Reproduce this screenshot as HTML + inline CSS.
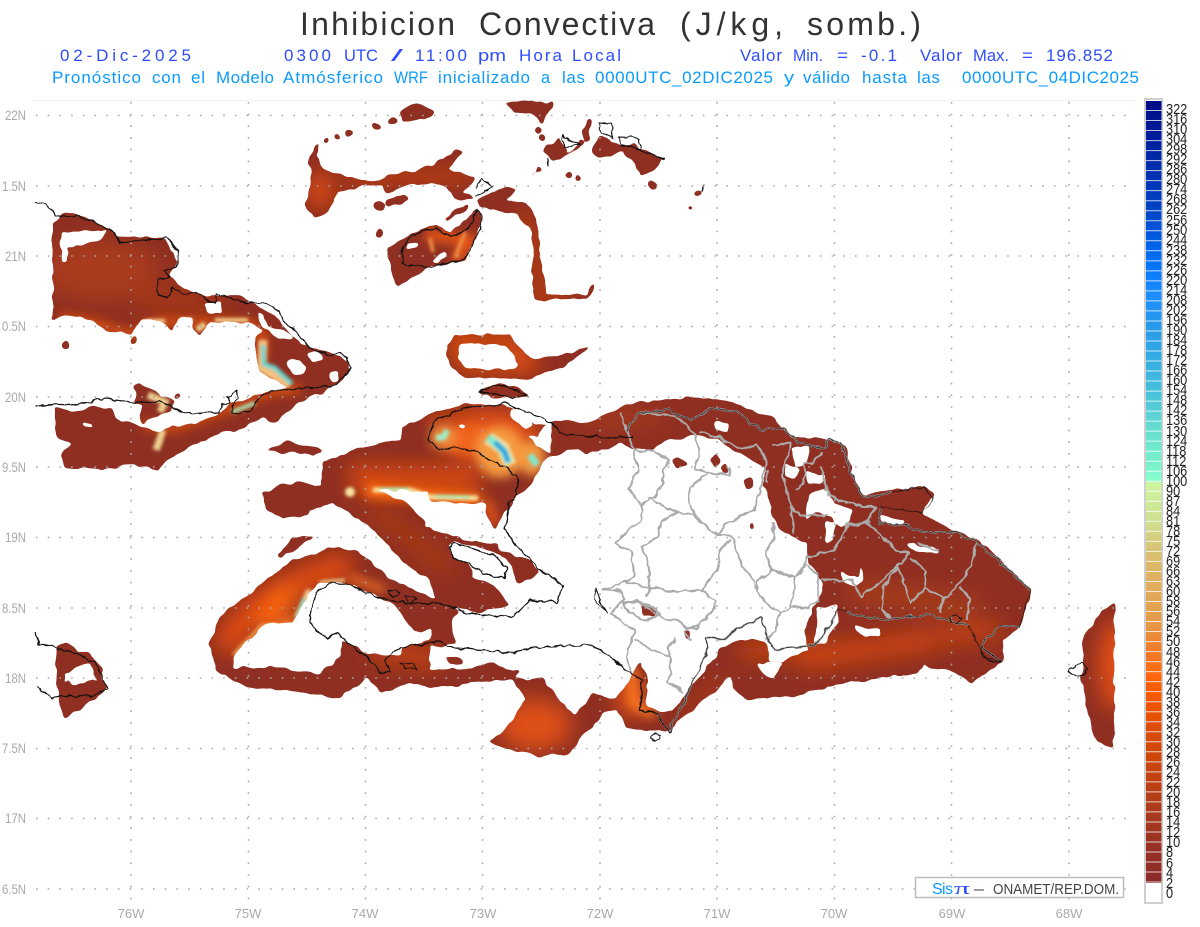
<!DOCTYPE html>
<html><head><meta charset="utf-8"><style>
html,body{margin:0;padding:0;background:#fff}
body{width:1200px;height:927px;overflow:hidden;position:relative}
svg{position:absolute;left:0;top:0}
#cb{position:absolute;left:1166px;top:105px;font:15px/10.05px "Liberation Sans",sans-serif;color:#222;transform:scaleX(.85);transform-origin:0 0}
text{font-family:"Liberation Sans",sans-serif}
</style></head><body>
<svg width="1200" height="927" viewBox="0 0 1200 927">
<defs>
<filter id="b2" filterUnits="userSpaceOnUse" x="0" y="0" width="1200" height="927"><feGaussianBlur stdDeviation="1.6"/></filter>
<filter id="b5" filterUnits="userSpaceOnUse" x="0" y="0" width="1200" height="927"><feGaussianBlur stdDeviation="5"/></filter>
<filter id="b10" filterUnits="userSpaceOnUse" x="0" y="0" width="1200" height="927"><feGaussianBlur stdDeviation="10"/></filter>
<filter id="org" filterUnits="userSpaceOnUse" x="0" y="0" width="1200" height="927" color-interpolation-filters="sRGB">
<feTurbulence type="fractalNoise" baseFrequency=".08" numOctaves="2" seed="3" result="n"/>
<feDisplacementMap in="SourceGraphic" in2="n" scale="7" xChannelSelector="R" yChannelSelector="G"/>
<feGaussianBlur stdDeviation="1.3"/>
<feComponentTransfer><feFuncA type="linear" slope="8" intercept="-2.6"/></feComponentTransfer>
</filter>
<filter id="wig" filterUnits="userSpaceOnUse" x="0" y="0" width="1200" height="927" color-interpolation-filters="sRGB">
<feTurbulence type="fractalNoise" baseFrequency=".11" numOctaves="2" seed="8" result="n"/>
<feDisplacementMap in="SourceGraphic" in2="n" scale="6" xChannelSelector="R" yChannelSelector="G"/>
</filter>
<linearGradient id="cg" gradientUnits="userSpaceOnUse" x1="0" y1="101" x2="0" y2="883">
<stop offset="0" stop-color="#000a85"/><stop offset=".141" stop-color="#0045c8"/><stop offset=".205" stop-color="#0070f8"/><stop offset=".244" stop-color="#1a8cff"/><stop offset=".295" stop-color="#2a9ce8"/><stop offset=".346" stop-color="#3ab4e0"/><stop offset=".385" stop-color="#50c8d8"/><stop offset=".423" stop-color="#68e0d0"/><stop offset=".462" stop-color="#78f0cc"/><stop offset=".486" stop-color="#88ffcc"/><stop offset=".488" stop-color="#ccf5a0"/><stop offset=".538" stop-color="#cfe090"/><stop offset=".577" stop-color="#d8c070"/><stop offset=".615" stop-color="#e0b060"/><stop offset=".667" stop-color="#e69a48"/><stop offset=".705" stop-color="#f07a28"/><stop offset=".731" stop-color="#ff6a10"/><stop offset=".756" stop-color="#f85800"/><stop offset=".808" stop-color="#da4b08"/><stop offset=".859" stop-color="#c5430f"/><stop offset=".910" stop-color="#a93a1c"/><stop offset=".962" stop-color="#952f25"/><stop offset="1" stop-color="#8a2c2a"/>
</linearGradient>
<mask id="land" maskUnits="userSpaceOnUse" x="0" y="0" width="1200" height="927">
<g fill="#fff" filter="url(#org)">
<polygon points="53,225 60,214 83,214 100,225 118,237 163,238 172,250 178,262 170,275 178,285 205,296 240,296 262,308 280,322 300,345 330,353 348,360 350,370 335,385 316,395 295,405 274,422 262,417 240,428 200,440 170,458 157,472 133,463 113,468 67,467 60,456 72,443 58,437 53,407 75,412 95,407 112,409 117,420 133,424 143,428 155,433 172,426 195,424 220,412 232,405 270,390 290,388 258,370 257,338 263,330 250,322 210,322 200,335 193,328 192,317 177,318 173,330 163,322 143,318 130,333 107,330 90,320 67,313 53,319"/>
<polygon points="133,386 138,382 145,388 155,390 160,396 168,398 175,402 170,410 158,416 148,418 144,425 140,415 144,405 135,402 137,394"/>
<polygon points="177,393 180,396 177,399 174,396"/>
<ellipse cx="66" cy="345" rx="3.5" ry="5"/>
<ellipse cx="133" cy="340" rx="3.5" ry="5"/>
<polygon points="263,493 283,485 300,483 322,487 323,462 370,445 400,440 403,428 430,413 465,405 500,405 525,415 535,425 560,422 589,422 610,413 636,403 695,397 728,402 753,410 775,420 791,437 829,440 846,447 852,477 863,497 888,490 926,487 934,495 922,513 955,532 981,542 1031,590 1019,627 1002,640 1002,662 972,682 955,673 922,663 918,673 842,683 800,695 749,700 732,690 732,675 669,730 661,730 627,727 615,710 602,713 568,753 539,757 488,743 505,730 526,700 509,677 543,680 568,710 575,717 594,693 615,700 623,690 640,663 648,680 645,705 661,713 673,710 711,663 720,650 741,640 764,642 770,662 783,662 810,650 804,630 817,603 823,590 821,580 808,563 808,543 791,537 778,525 770,507 762,483 766,470 750,458 737,452 720,440 695,435 669,440 652,450 631,448 619,443 585,455 577,448 547,458 541,467 526,490 514,497 495,530 486,513 485,503 453,502 430,502 427,492 407,490 373,488 400,500 417,512 427,528 450,535 473,543 495,542 500,552 530,560 540,572 517,583 510,565 500,555 480,547 455,541 448,547 453,557 467,565 473,577 490,583 510,605 477,612 440,603 427,577 410,567 390,547 367,523 333,502 310,510 307,515 283,519 267,510"/>
<polygon points="210,643 220,617 250,593 293,560 333,547 360,553 387,577 413,590 440,600 460,612 452,622 456,645 430,645 430,670 467,668 493,663 520,672 510,680 470,684 433,687 407,683 382,692 367,677 340,698 300,692 247,687 217,670"/>
<polygon points="445,655 462,660 463,664 450,664"/>
<polygon points="278,555 293,538 315,536 300,547 280,558"/>
<polygon points="267,450 287,442 320,447 323,452 313,457 293,452"/>
<polygon points="308,157 320,143 316,157 325,170 344,175 362,180 383,180 388,175 413,172 432,165 455,150 463,152 448,170 475,177 463,193 475,200 505,188 517,190 505,200 526,203 536,220 541,263 545,295 586,295 595,283 595,290 586,298 534,300 532,233 517,213 482,208 478,200 460,200 444,185 413,183 387,192 383,185 362,185 337,193 329,213 314,217 304,203 310,187 312,170"/>
<polygon points="387,247 421,230 436,225 450,235 475,210 482,213 478,233 465,260 429,267 398,287 392,270"/>
<ellipse cx="379" cy="206" rx="6" ry="5"/><polygon points="387,200 405,195 410,199 400,205 388,207"/>
<ellipse cx="379" cy="232" rx="4" ry="5"/><polygon points="444,218 455,210 469,206 466,211 452,216 446,221"/>
<polygon points="400,112 417,102 428,108 434,112 425,118 412,118 402,122"/>
<ellipse cx="392" cy="122" rx="5" ry="3"/><ellipse cx="377" cy="126" rx="5.5" ry="3"/><ellipse cx="349" cy="133" rx="4" ry="3"/>
<circle cx="337" cy="137" r="2.5"/><circle cx="327" cy="141" r="2.5"/>
<polygon points="503,102 553,102 546,118 542,123 530,113 515,112"/>
<circle cx="538" cy="130" r="3"/><circle cx="542" cy="137" r="3"/>
<polygon points="543,153 548,145 553,143 557,137 563,145 567,150 562,155 577,147 580,140 584,143 578,150 560,157 552,160 549,156"/>
<polygon points="582,130 590,120 593,122 588,128 590,140 584,142"/>
<polygon points="593,150 600,135 606,137 613,143 623,147 633,142 640,150 663,158 653,170 640,177 635,163 623,150 610,157 597,155"/>
<polygon points="533,174 539,165 543,172 537,170 534,176"/>
<circle cx="568" cy="174" r="2.5"/><circle cx="578" cy="178" r="2.5"/><circle cx="653" cy="185" r="4"/>
<ellipse cx="698" cy="193" rx="4" ry="2.5"/><circle cx="691" cy="208" r="2"/>
<polygon points="447,345 455,335 510,335 530,360 565,355 590,347 565,365 530,378 465,378 450,365"/>
<polygon points="477,390 500,384 520,388 528,396 500,398 480,395"/>
<polygon points="1114,603 1098,615 1085,635 1082,680 1090,720 1097,740 1114,747"/>
<polygon points="57,648 68,643 78,652 90,653 97,663 107,689 87,703 65,717 60,707 57,687"/>
<polygon points="640,607 647,604 656,612 654,617 644,615"/><polygon points="684,632 690,630 691,638 686,640"/>
<polygon points="671,460 680,457 687,463 678,470"/><polygon points="711,460 715,455 719,462 714,468"/><polygon points="721,468 726,463 728,473 724,474"/><polygon points="744,482 752,478 754,486 746,490"/><polygon points="750,525 754,524 754,530 750,530"/>
</g>
</mask>
</defs>

<line x1="33" y1="100.5" x2="1135" y2="100.5" stroke="#f0f0f0"/>

<g mask="url(#land)">
<rect width="1200" height="927" fill="#8f2f22"/>
<g filter="url(#b10)">
<ellipse cx="100" cy="270" rx="60" ry="30" fill="#a83a1c"/>
<ellipse cx="180" cy="300" rx="50" ry="15" fill="#a23418"/>
<ellipse cx="320" cy="190" rx="12" ry="18" fill="#e04e10"/>
<path d="M345 178L470 176" stroke="#d8480f" stroke-width="9" fill="none"/>
<path d="M520 212L536 240 538 298 575 298" stroke="#d8480f" stroke-width="8" fill="none"/>
<path d="M455 340H510L530 365H465Z" stroke="#f0560f" stroke-width="12" fill="none"/>
<path d="M225 650C240 610 290 580 350 565" stroke="#e04c0f" stroke-width="26" fill="none"/>
<path d="M290 590L265 630" stroke="#ff6a10" stroke-width="22" fill="none"/>
<path d="M370 650L440 660" stroke="#c4420f" stroke-width="18" fill="none"/>
<ellipse cx="535" cy="725" rx="36" ry="26" fill="#dd4f12"/>
<ellipse cx="630" cy="695" rx="12" ry="22" fill="#ef5a14"/>
<path d="M740 650L835 650 1000 630" stroke="#cc450f" stroke-width="14" fill="none"/>
<path d="M800 660L930 640" stroke="#cc450f" stroke-width="20" fill="none"/>
<ellipse cx="1116" cy="665" rx="18" ry="45" fill="#e04e12"/>
<path d="M350 478L480 480" stroke="#d8480f" stroke-width="26" fill="none"/>
<path d="M370 505L450 570" stroke="#a53818" stroke-width="20" fill="none"/>
<ellipse cx="490" cy="435" rx="50" ry="25" fill="#e65314"/>
<path d="M850 590L980 610" stroke="#a53a1e" stroke-width="26" fill="none"/>
<path d="M680 722L725 680" stroke="#c03e16" stroke-width="6" fill="none"/>
<ellipse cx="620" cy="418" rx="50" ry="8" fill="#a83a1c"/>
</g>
<g filter="url(#b5)">
<path d="M60 318L90 322 130 335 160 322 250 324 263 335 260 375 290 388" stroke="#e2520f" stroke-width="8" fill="none"/>
<path d="M143 425L175 428 220 412 270 392 300 388" stroke="#e2520f" stroke-width="7" fill="none"/>
<path d="M365 490L480 500" stroke="#ff6a10" stroke-width="14" fill="none"/>
<path d="M487 500L495 525" stroke="#ef5a14" stroke-width="8" fill="none"/>
<path d="M425 420L470 415" stroke="#c8430f" stroke-width="6" fill="none"/>
<ellipse cx="470" cy="440" rx="30" ry="14" fill="#f0651a"/>
<ellipse cx="500" cy="452" rx="24" ry="26" fill="#f59a40"/>
<ellipse cx="532" cy="458" rx="13" ry="18" fill="#f59a40"/>
<ellipse cx="443" cy="437" rx="13" ry="12" fill="#f09040"/>
<path d="M240 655L295 620" stroke="#ff7a20" stroke-width="10" fill="none"/>
<path d="M350 578L385 590" stroke="#ff7a20" stroke-width="6" fill="none"/>
<path d="M425 235L470 240 455 262" stroke="#ef5a14" stroke-width="10" fill="none"/>
<path d="M630 665L635 705 655 715" stroke="#ff7a20" stroke-width="9" fill="none"/>
</g>
<g filter="url(#b2)">
<path d="M263 340L262 368 290 385" stroke="#f3c17e" stroke-width="9" fill="none"/>
<path d="M263 345L264 364 275 368 292 384" stroke="#5fd5d0" stroke-width="4.5" fill="none"/>
<path d="M145 321H165M180 320H192M215 320H248" stroke="#f3d090" stroke-width="4" fill="none"/>
<path d="M148 395L165 402 160 412M160 440L156 450 163 430" stroke="#eccf8e" stroke-width="7" fill="none"/>
<path d="M197 330L205 324" stroke="#eccf8e" stroke-width="6"/>
<path d="M232 412L255 403" stroke="#a7e2b0" stroke-width="4"/>
<path d="M373 490L410 490 430 497 478 498" stroke="#f7e6a0" stroke-width="5" fill="none"/>
<path d="M380 489L408 489M435 496L470 497" stroke="#8df2c4" stroke-width="2.5" fill="none"/>
<circle cx="350" cy="492" r="5" fill="#f7e6a0"/>
<path d="M488 438L503 448 510 465" stroke="#f7e0a0" stroke-width="13" fill="none"/>
<path d="M488 437L503 450 509 463" stroke="#80ead0" stroke-width="8" fill="none"/>
<path d="M495 442L505 452 508 462" stroke="#2aa0e0" stroke-width="5" fill="none"/>
<path d="M530 455L537 465" stroke="#7de8d0" stroke-width="7"/>
<path d="M436 438L444 437 447 430" stroke="#9eeec8" stroke-width="6" fill="none"/>
<path d="M310 590L297 618" stroke="#f2c488" stroke-width="7"/>
<path d="M304 598L297 620" stroke="#6fe0c8" stroke-width="3"/>
<path d="M233 655L262 625 290 625" stroke="#f0a050" stroke-width="3" fill="none"/>
<path d="M320 582L345 580" stroke="#eecb8e" stroke-width="3"/>
<path d="M430 238L433 252M465 232L455 258" stroke="#f08a40" stroke-width="4" fill="none"/>
</g>
</g>

<g fill="#fff" filter="url(#org)">
<polygon points="62,232 110,232 100,240 75,245 67,248 67,263 62,262"/>
<polygon points="203,303 222,303 222,313 208,313"/>
<polygon points="267,327 280,327 293,336 293,340 278,338"/>
<polygon points="287,362 300,360 305,368 302,375 292,372"/>
<polygon points="307,354 317,352 322,360 312,362"/>
<polygon points="330,372 338,370 338,380 332,384"/>
<polygon points="257,313 264,316 268,330 262,326"/>
<polygon points="80,422 92,424 93,428 84,427"/>
<polygon points="65,673 89,663 92,673 102,685 92,677 83,685 73,684 69,677 65,682"/>
<polygon points="408,242 418,243 416,248 407,248"/>
<polygon points="430,262 445,252 447,256 438,263"/>
<polygon points="460,345 505,345 520,365 505,370 465,367 458,358"/>
<polygon points="233,657 232,668 280,668 320,673 340,657 343,640 370,655 400,655 402,647 430,640 432,628 420,632 413,632 397,608 383,600 353,585 320,582 310,593 293,623 267,623"/>
<polygon points="510,410 527,413 533,425 526,430 513,420"/>
<polygon points="527,435 538,438 548,420 552,420 550,455 542,450"/>
<polygon points="460,425 466,425 466,428 460,428"/>
<polygon points="716,423 728,423 730,432 716,432"/>
<polygon points="791,448 810,448 806,462 795,467"/>
<polygon points="783,463 800,470 796,478 785,477"/>
<polygon points="804,473 825,474 822,483 808,483"/>
<polygon points="810,495 825,490 835,503 852,510 850,520 840,527 830,515 815,512 805,520"/>
<polygon points="825,520 835,522 833,540 826,543"/>
<polygon points="840,570 848,575 858,580 862,565 863,580 855,587 843,580"/>
<polygon points="880,517 905,519 903,524 882,523"/>
<polygon points="905,543 918,546 939,550 938,554 915,551"/>
<polygon points="855,625 868,630 880,628 880,637 872,635 860,635"/>
<polygon points="817,607 836,605 838,622 825,643 815,645"/>
<polygon points="756,665 770,662 783,662 772,680"/>
</g>

<g fill="none" stroke="#ababab" stroke-width="2" stroke-linejoin="round" filter="url(#wig)">
<path d="M621 412L627 430 631 440 638 470 629 490 642 505 640 520 627 533 615 543 631 553 634 577 623 583 602 590 619 590 625 600 610 613 634 630 627 657 631 672"/>
<path d="M634 450L657 452 669 460 663 470 663 483 657 495 642 505"/>
<path d="M648 498L678 513 693 513 701 523 718 535 730 535 737 550 743 567 754 580 758 593 770 607 779 613 777 630 766 640"/>
<path d="M678 513L663 520 657 537 642 547 648 563 650 587 646 597"/>
<path d="M625 582L648 587 678 592 701 590 709 580 718 570 720 550 730 540"/>
<path d="M701 590L716 602 714 610 695 630 674 620 661 618 646 607 636 600 622 604"/>
<path d="M674 637L669 650 671 673 667 682 684 693M634 640L669 657M714 610L700 625 686 630 690 640"/>
<path d="M640 412L675 416 695 433 699 453 695 468 709 473 728 475 730 468M709 473L690 487 688 503 701 523"/>
<path d="M699 432L720 437 737 448 758 445 766 460 762 483 754 510 724 525 718 535"/>
<path d="M772 522L775 537 766 550 772 570 796 577 804 567 808 557 834 550 846 527 867 523"/>
<path d="M772 570L758 582 758 593M796 577L791 607 779 613M791 607L808 608 819 600 817 573 806 565"/>
<path d="M772 445L791 443 783 470 785 487 791 507 794 533M768 470L766 483M791 507L800 515 829 515M821 467L829 497 863 507 876 507 867 523"/>
<path d="M804 463H812L823 452M804 463L804 480 796 490"/>
<path d="M867 523L880 535 901 553 909 553 897 567 884 587 882 610 892 620"/>
<path d="M846 525L867 523M821 580H852L861 597 880 583 897 565 905 587 911 603 926 588 943 597 941 613"/>
<path d="M911 557L926 572 924 590M918 543L939 550M977 543L970 567 960 583 943 600M960 587L970 600 966 620"/>
<path d="M880 507L878 523 905 525 922 533 955 533 977 542 1031 590"/>
<path d="M622 604L636 602 652 607 660 615 646 620 630 613Z"/>
<path d="M627 430L640 412 669 410 690 420 711 408 737 412 762 430 781 428 800 443 825 448 829 440 842 443 850 470 863 497 892 492"/>
<path d="M1019 627L1000 625 981 647 1002 662M968 625L947 620 926 615 901 618 880 620 846 612"/>
<path d="M833 620L815 645 775 650 768 640 762 618 737 628 724 640 707 637 707 653 669 732 657 713"/>
</g>

<g fill="none" stroke="#111" stroke-width="1.3" stroke-linejoin="round" filter="url(#wig)">
<path d="M35 203L45 205 52 210 55 215 77 217 92 220 115 232 119 243 134 240 149 240 165 238 178 250 176 267 165 270 170 277 159 280 157 293 168 298 173 287 182 295 197 293 207 300 215 303 217 295 230 297 240 302 263 303 280 310 283 320 300 337 310 348 327 355 340 353 347 358 350 368 337 385"/>
<path d="M35 407L53 404 70 405 87 402 107 398 130 403 147 402 163 403 173 408 187 414 203 413 220 412 223 405 230 402 227 397 237 390 238 398 232 406 232 413 250 412 257 400 270 391 333 386 337 385"/>
<path d="M35 632L38 645 52 645 58 650 70 651 85 657 95 663 107 688 90 697 72 695 52 698 37 686"/>
<path d="M402 263L402 253 406 242 421 230 436 228 450 237 467 230 478 210 482 217 480 230 465 260 429 267 406 265Z"/>
<path d="M475 188L482 178 492 186 484 192 475 196"/>
<path d="M479 391L500 385 517 390 527 396 510 397Z"/>
<path d="M429 437L436 420 463 408 505 403 526 412 552 423 560 433 594 437 634 438"/>
<path d="M429 437L429 443 438 448 455 448 472 450 488 458 505 468 516 475 520 486 515 490 513 500 510 502 505 530 517 547 533 563 547 575 562 585 558 602 530 600 513 617 467 613 440 603 407 603 387 600 367 593 350 585 333 583 315 592 310 617 313 628 327 638 337 633 347 642 367 657 380 673 390 672 385 660 400 647 440 642 450 647 514 653 535 647 594 645 627 670 642 680 640 710 657 713 669 732"/>
<path d="M448 547L453 543 473 548 497 557 507 570 505 579 483 573 467 563 453 557Z"/>
<path d="M627 430L640 412 669 410 690 420 711 408 737 412 762 430 781 428 800 443 825 448 829 440 842 443 850 470 863 497 892 492 924 488 934 497 922 513 880 507 878 523 905 525 922 533 955 533 977 542 1031 590 1019 627 1000 625 981 647 1002 662 983 657 968 625 947 620 926 615 901 618 880 620 846 612 838 610 833 620 815 645 775 650 768 640 762 618 737 628 724 640 707 637 707 653 669 732" stroke-width="1" opacity=".75"/>
<path d="M981 647L1002 662 990 662 981 652Z" stroke-width="1"/>
<path d="M950 618L955 614 962 618 958 622 952 622Z" stroke-width="1"/>
<path d="M400 663L412 664 417 670 405 669Z" stroke-width="1"/>
<path d="M388 592L395 588 400 594 393 597Z" stroke-width="1"/>
<path d="M405 597L412 596 417 599 409 603Z" stroke-width="1"/>
<path d="M596 588L594 597 606 612 600 600Z" stroke-width="1"/>
<path d="M653 733L660 735 656 742 652 738Z" stroke-width="1"/>
<path d="M598 123L612 124 613 137 603 133Z" stroke="#222"/>
<path d="M618 137L640 138 642 150 623 146Z" stroke="#222"/>
<path d="M623 145L663 158" stroke-width="1.5"/>
<path d="M562 135L565 147 580 145 562 135ZM547 158L548 165M702 185L703 192"/>
<path d="M1068 671L1082 662 1088 670 1081 676 1068 673Z"/>
</g>

<g stroke="#a8a8a8" stroke-width="1.6" fill="none" stroke-dasharray="1.6 10.1">
<path d="M131 102V905M248.5 102V905M365.5 102V905M482.5 102V905M600 102V905M717 102V905M834.5 102V905M951.5 102V905M1069 102V905"/>
<path d="M36 115.5H1130M36 186H1130M36 256H1130M36 326.5H1130M36 397H1130M36 467H1130M36 537.5H1130M36 608H1130M36 678H1130M36 748.5H1130M36 818.5H1130M36 889H1130"/>
</g>

<g fill="#a9a9a9" font-size="14">
<text x="5" y="120" textLength="21" lengthAdjust="spacingAndGlyphs">22N</text><text x="2" y="191" textLength="24" lengthAdjust="spacingAndGlyphs">1.5N</text><text x="5" y="261" textLength="21" lengthAdjust="spacingAndGlyphs">21N</text><text x="2" y="331" textLength="24" lengthAdjust="spacingAndGlyphs">0.5N</text><text x="5" y="402" textLength="21" lengthAdjust="spacingAndGlyphs">20N</text><text x="2" y="472" textLength="24" lengthAdjust="spacingAndGlyphs">9.5N</text><text x="5" y="542" textLength="21" lengthAdjust="spacingAndGlyphs">19N</text><text x="2" y="613" textLength="24" lengthAdjust="spacingAndGlyphs">8.5N</text><text x="5" y="683" textLength="21" lengthAdjust="spacingAndGlyphs">18N</text><text x="2" y="753" textLength="24" lengthAdjust="spacingAndGlyphs">7.5N</text><text x="5" y="823" textLength="21" lengthAdjust="spacingAndGlyphs">17N</text><text x="2" y="894" textLength="24" lengthAdjust="spacingAndGlyphs">6.5N</text>
</g>
<g fill="#a9a9a9" font-size="13" text-anchor="middle">
<text x="131" y="918">76W</text><text x="248" y="918">75W</text><text x="365" y="918">74W</text><text x="483" y="918">73W</text><text x="600" y="918">72W</text><text x="717" y="918">71W</text><text x="834" y="918">70W</text><text x="952" y="918">69W</text><text x="1069" y="918">68W</text>
</g>

<g font-size="32" fill="#333">
<text x="300" y="35" textLength="155" lengthAdjust="spacing">Inhibicion</text>
<text x="479" y="35" textLength="176" lengthAdjust="spacing">Convectiva</text>
<text x="680" y="35" textLength="103" lengthAdjust="spacing">(J/kg,</text>
<text x="807" y="35" textLength="114" lengthAdjust="spacing">somb.)</text>
</g>
<g font-size="17" fill="#2f4dff">
<text x="60" y="61" textLength="131" lengthAdjust="spacing">02-Dic-2025</text>
<text x="284" y="61" textLength="47" lengthAdjust="spacing">0300</text>
<text x="344" y="61" textLength="34" lengthAdjust="spacingAndGlyphs">UTC</text>
<text x="391" y="61" textLength="12" lengthAdjust="spacingAndGlyphs">/</text>
<text x="415" y="61" textLength="52" lengthAdjust="spacing">11:00</text>
<text x="478" y="61" textLength="28" lengthAdjust="spacingAndGlyphs">pm</text>
<text x="519" y="61" textLength="43" lengthAdjust="spacing">Hora</text>
<text x="572" y="61" textLength="49" lengthAdjust="spacing">Local</text>
<text x="740" y="61" textLength="42" lengthAdjust="spacing">Valor</text>
<text x="793" y="61" textLength="30" lengthAdjust="spacingAndGlyphs">Min.</text>
<text x="837" y="61" textLength="11" lengthAdjust="spacingAndGlyphs">=</text>
<text x="861" y="61" textLength="36" lengthAdjust="spacing">-0.1</text>
<text x="920" y="61" textLength="42" lengthAdjust="spacing">Valor</text>
<text x="973" y="61" textLength="36" lengthAdjust="spacingAndGlyphs">Max.</text>
<text x="1022" y="61" textLength="11" lengthAdjust="spacingAndGlyphs">=</text>
<text x="1046" y="61" textLength="67" lengthAdjust="spacing">196.852</text>
</g>
<g font-size="17" fill="#0a9bff">
<text x="52" y="83" textLength="89" lengthAdjust="spacing">Pronóstico</text>
<text x="152" y="83" textLength="29" lengthAdjust="spacing">con</text>
<text x="191" y="83" textLength="14" lengthAdjust="spacing">el</text>
<text x="216" y="83" textLength="58" lengthAdjust="spacing">Modelo</text>
<text x="283" y="83" textLength="100" lengthAdjust="spacing">Atmósferico</text>
<text x="394" y="83" textLength="34" lengthAdjust="spacingAndGlyphs">WRF</text>
<text x="438" y="83" textLength="92" lengthAdjust="spacing">inicializado</text>
<text x="541" y="83" textLength="9" lengthAdjust="spacingAndGlyphs">a</text>
<text x="562" y="83" textLength="23" lengthAdjust="spacing">las</text>
<text x="595" y="83" textLength="178" lengthAdjust="spacing">0000UTC_02DIC2025</text>
<text x="784" y="83" textLength="10" lengthAdjust="spacingAndGlyphs">y</text>
<text x="803" y="83" textLength="47" lengthAdjust="spacing">válido</text>
<text x="862" y="83" textLength="45" lengthAdjust="spacing">hasta</text>
<text x="917" y="83" textLength="23" lengthAdjust="spacing">las</text>
<text x="962" y="83" textLength="177" lengthAdjust="spacing">0000UTC_04DIC2025</text>
</g>

<rect x="1145" y="99" width="17" height="804" fill="#fff" stroke="#cfcfcf" stroke-width="2"/>
<rect x="1146" y="101" width="15.5" height="782" fill="url(#cg)"/>
<line x1="1153.75" y1="101" x2="1153.75" y2="883" stroke="#fff" stroke-width="15.5" stroke-dasharray="1 9.02" stroke-dashoffset="1" opacity=".75"/>

<rect x="915.5" y="877.5" width="208" height="20" fill="#fff" stroke="#bdbdbd" stroke-width="1.5"/>
<text x="932" y="894" font-size="16" fill="#0a9bff" textLength="21" lengthAdjust="spacing">Sis</text>
<text x="954" y="894" font-size="17" fill="#2f4dff" textLength="16" lengthAdjust="spacingAndGlyphs" style="font-family:'Liberation Serif',serif">π</text>
<text x="974" y="894" font-size="16" fill="#444" textLength="10" lengthAdjust="spacingAndGlyphs">–</text>
<text x="993" y="894" font-size="14.5" fill="#444" textLength="126" lengthAdjust="spacingAndGlyphs">ONAMET/REP.DOM.</text>
</svg>
<div id="cb">322<br>316<br>310<br>304<br>298<br>292<br>286<br>280<br>274<br>268<br>262<br>256<br>250<br>244<br>238<br>232<br>226<br>220<br>214<br>208<br>202<br>196<br>190<br>184<br>178<br>172<br>166<br>160<br>154<br>148<br>142<br>136<br>130<br>124<br>118<br>112<br>106<br>100<br>90<br>87<br>84<br>81<br>78<br>75<br>72<br>69<br>66<br>63<br>60<br>58<br>56<br>54<br>52<br>50<br>48<br>46<br>44<br>42<br>40<br>38<br>36<br>34<br>32<br>30<br>28<br>26<br>24<br>22<br>20<br>18<br>16<br>14<br>12<br>10<br>8<br>6<br>4<br>2<br>0</div>
</body></html>
